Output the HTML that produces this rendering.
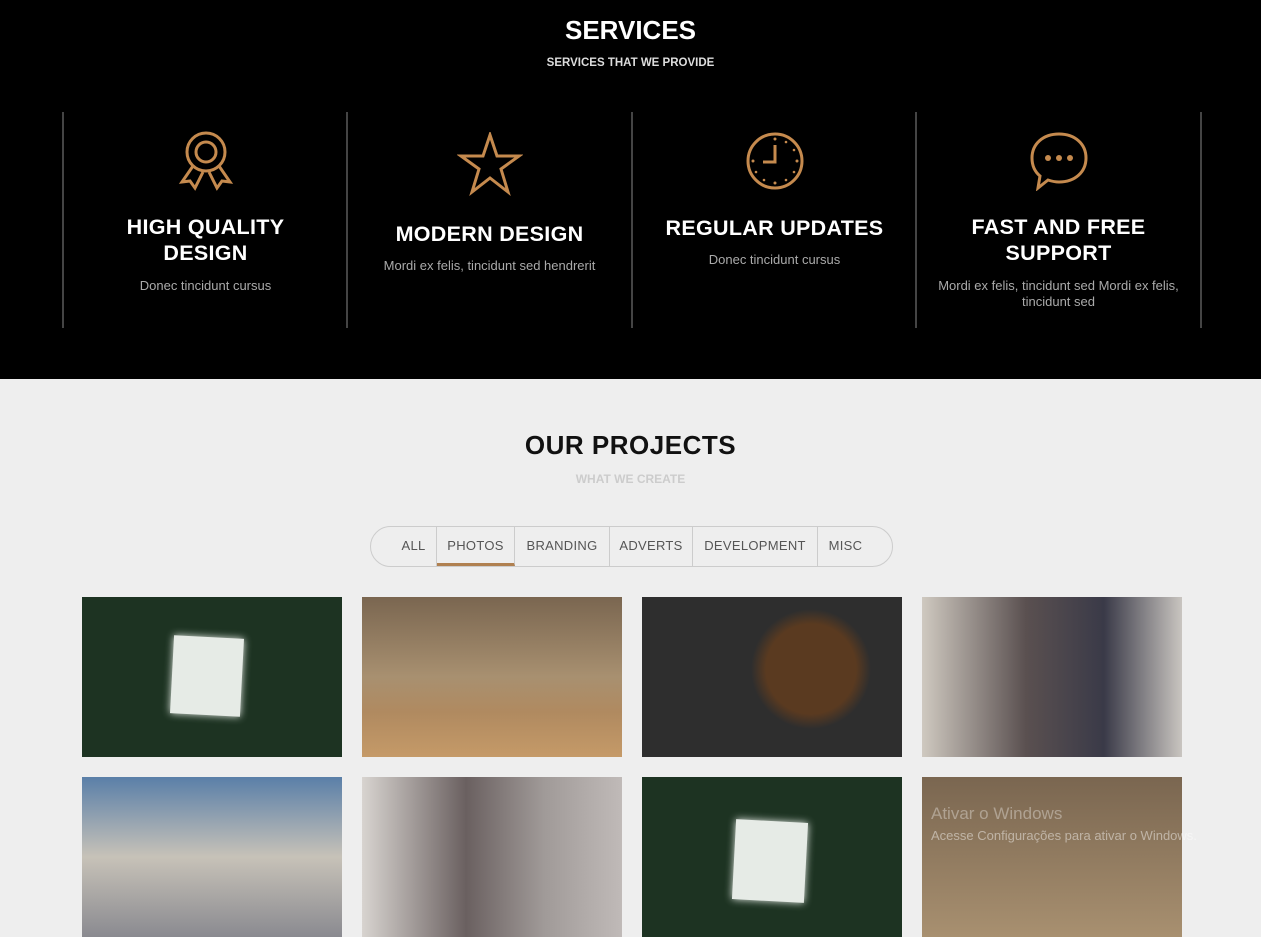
<!DOCTYPE html>
<html><head><meta charset="utf-8"><style>
*{margin:0;padding:0;box-sizing:border-box}
body{width:1261px;height:885px;overflow:hidden;background:#eee;font-family:"Liberation Sans",sans-serif;position:relative}
.top{position:absolute;left:0;top:0;width:1261px;height:379px;background:#000;color:#fff;text-align:center}
.top h1{position:absolute;top:15px;width:100%;font-size:26px;font-weight:bold}
.top h2{position:absolute;top:57px;width:100%;font-size:11.5px;font-weight:bold;color:#ddd}
.col{position:absolute;top:112px;height:216px;width:285px;border-left:2px solid #444;text-align:center}
.col svg{position:absolute;left:50%;transform:translateX(-50%)}
.col .t{position:absolute;left:0;right:0;font-size:21.5px;font-weight:bold;line-height:26px;color:#fff;letter-spacing:.3px}
.col .d{position:absolute;left:18px;right:18px;font-size:13px;line-height:16px;color:#aaa}
.h3{position:absolute;top:430px;width:100%;text-align:center;font-size:26px;font-weight:bold;color:#111;letter-spacing:.5px}
.h4{position:absolute;top:472px;width:100%;text-align:center;font-size:12px;font-weight:bold;color:#ccc}
.pill{position:absolute;left:370px;top:526px;width:523px;height:41px;border:1px solid #ccc;border-radius:21px;display:flex;padding-left:20px}
.pill div{font-size:13px;color:#555;text-align:center;line-height:38px;border-right:1px solid #ccc;letter-spacing:.3px}
.pill div:last-child{border:none}
.img{position:absolute;width:260px;height:160px}
</style></head><body>
<div class="top">
<h1>SERVICES</h1><h2>SERVICES THAT WE PROVIDE</h2>
<div class="col" style="left:62px">
<svg style="top:18px" width="60" height="62" viewBox="0 0 60 62" fill="none" stroke="#c58a4e" stroke-width="3"><circle cx="30" cy="22" r="19"/><circle cx="30" cy="22" r="10"/><path d="M17 36 L6 52 L14 51 L19 58 L27 42 M43 36 L54 52 L46 51 L41 58 L33 42"/></svg>
<div class="t" style="top:102px">HIGH QUALITY<br>DESIGN</div>
<div class="d" style="top:166px">Donec tincidunt cursus</div></div>
<div class="col" style="left:346px">
<svg style="top:20px" width="66" height="64" viewBox="0 0 66 64" fill="none" stroke="#c58a4e" stroke-width="3"><path d="M33 3 L40 24 L62 24 L44 37 L51 60 L33 46 L15 60 L22 37 L4 24 L26 24 Z"/></svg>
<div class="t" style="top:109px">MODERN DESIGN</div>
<div class="d" style="top:146px">Mordi ex felis, tincidunt sed hendrerit</div></div>
<div class="col" style="left:631px">
<svg style="top:19px" width="60" height="60" viewBox="0 0 60 60" fill="none" stroke="#c58a4e" stroke-width="3"><circle cx="30" cy="30" r="27"/><path d="M30 14 V31 H18"/><g fill="#c58a4e" stroke="none"><circle cx="30" cy="8" r="1.5"/><circle cx="52" cy="30" r="1.5"/><circle cx="30" cy="52" r="1.5"/><circle cx="8" cy="30" r="1.5"/><circle cx="41" cy="11" r="1.3"/><circle cx="49" cy="19" r="1.3"/><circle cx="49" cy="41" r="1.3"/><circle cx="41" cy="49" r="1.3"/><circle cx="19" cy="49" r="1.3"/><circle cx="11" cy="41" r="1.3"/></g></svg>
<div class="t" style="top:103px">REGULAR UPDATES</div>
<div class="d" style="top:140px">Donec tincidunt cursus</div></div>
<div class="col" style="left:915px;width:287px;border-right:2px solid #444">
<svg style="top:19px" width="60" height="60" viewBox="0 0 60 60" fill="none" stroke="#c58a4e" stroke-width="3"><path d="M30 3 C46 3 57 13 57 27 C57 41 46 51 30 51 C26 51 22 50 19 49 L9 57 L11 45 C5 40 3 34 3 27 C3 13 14 3 30 3 Z"/><g fill="#c58a4e" stroke="none"><circle cx="19" cy="27" r="3"/><circle cx="30" cy="27" r="3"/><circle cx="41" cy="27" r="3"/></g></svg>
<div class="t" style="top:102px">FAST AND FREE<br>SUPPORT</div>
<div class="d" style="top:166px">Mordi ex felis, tincidunt sed Mordi ex felis, tincidunt sed</div></div>
</div>
<div class="h3">OUR PROJECTS</div><div class="h4">WHAT WE CREATE</div>
<div class="pill"><div style="width:46px">ALL</div><div style="width:78px;border-bottom:3px solid #b08050">PHOTOS</div><div style="width:95px">BRANDING</div><div style="width:83px">ADVERTS</div><div style="width:125px">DEVELOPMENT</div><div style="width:55px">MISC</div></div>
<div class="img" style="left:82px;top:597px;background:#1d3322"><div style="position:absolute;left:90px;top:40px;width:70px;height:78px;background:#e6ebe6;transform:rotate(3deg);box-shadow:0 0 8px #e6ebe6"></div></div>
<div class="img" style="left:362px;top:597px;background:linear-gradient(#7a6650 0,#a89070 50%,#b08a60 72%,#c59a68 100%)"></div>
<div class="img" style="left:642px;top:597px;background:radial-gradient(circle at 65% 45%,#5a3a20 0 45px,transparent 60px),#2e2e2e"></div>
<div class="img" style="left:922px;top:597px;background:linear-gradient(90deg,#cfc9c0,#5a5050 40%,#3a3a48 70%,#c9c5c0)"></div>
<div class="img" style="left:82px;top:777px;background:linear-gradient(#5a7fa8,#c7c2b8 50%,#8a8a90)"></div>
<div class="img" style="left:362px;top:777px;background:linear-gradient(90deg,#d8d4d0,#6a6060 40%,#a09a98 70%,#c0bab8)"></div>
<div class="img" style="left:642px;top:777px;background:#1d3322"><div style="position:absolute;left:92px;top:44px;width:72px;height:80px;background:#e6ebe6;transform:rotate(3deg);box-shadow:0 0 8px #e6ebe6"></div></div>
<div class="img" style="left:922px;top:777px;background:linear-gradient(#7a6650,#a89070)"></div>
<div style="position:absolute;left:931px;top:804px;font-size:17px;color:rgba(255,255,255,.35)">Ativar o Windows</div>
<div style="position:absolute;left:931px;top:828px;font-size:13px;color:rgba(255,255,255,.45)">Acesse Configurações para ativar o Windows.</div>
</body></html>
